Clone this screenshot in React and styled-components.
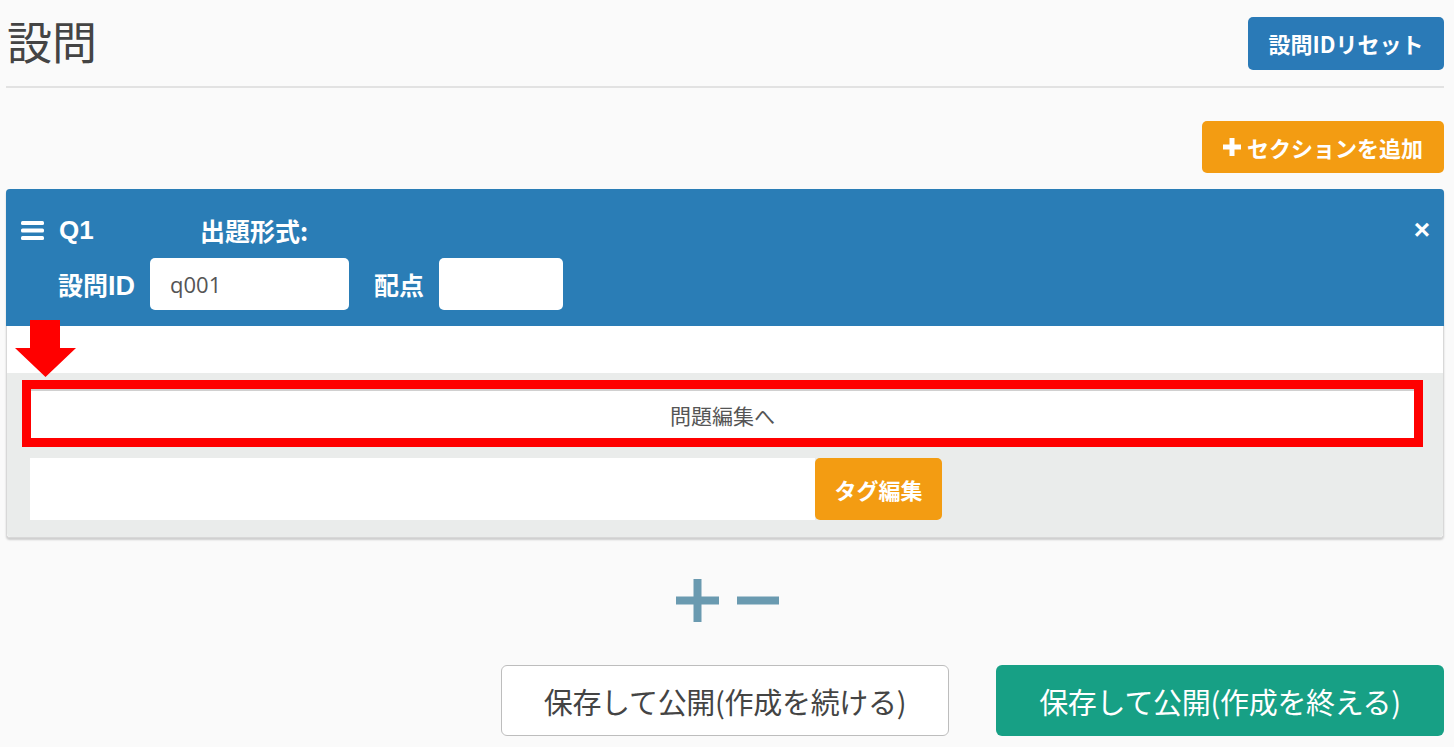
import React from "react";
import styled, { createGlobalStyle } from "styled-components";

const GlobalStyle = createGlobalStyle`
  body {
    margin: 0;
    background: #fafafa;
    font-family: "Noto Sans CJK JP", "Noto Sans", sans-serif;
  }
`;

const Page = styled.div`
  width: 1438px;
  margin-left: 6px;
`;

const TitleRow = styled.div`
  display: flex;
  justify-content: space-between;
  align-items: center;
  height: 86px;
  border-bottom: 2px solid #e2e2e2;
`;

const Title = styled.h1`
  margin: 0 0 4px 1px;
  font-size: 45px;
  font-weight: 400;
  color: #444;
  line-height: 52px;
`;

const Button = styled.button`
  display: inline-flex;
  align-items: center;
  justify-content: center;
  gap: 6px;
  border: none;
  border-radius: 5px;
  font-family: inherit;
  font-weight: 700;
  font-size: ${(p) => p.size || 20}px;
  color: #fff;
  background: ${(p) => p.bg};
  height: ${(p) => p.h}px;
  width: ${(p) => p.w}px;
  padding: 0;
`;

const SectionRow = styled.div`
  display: flex;
  justify-content: flex-end;
  padding-top: 33px;
`;

const Panel = styled.div`
  position: relative;
  margin-top: 16px;
  border: 1px solid #d8d8d8;
  border-top: none;
  border-radius: 4px;
  background: #fff;
  box-shadow: 0 2px 2px rgba(0, 0, 0, 0.18);
`;

const PanelHead = styled.div`
  background: #2a7db6;
  border-radius: 4px 4px 0 0;
  height: 137px;
  box-sizing: border-box;
  padding: 24px 14px 0 15px;
  color: #fff;
  margin: 0 -1px;
`;

const HeadRow = styled.div`
  display: flex;
  align-items: center;
  height: ${(p) => p.h}px;
  margin-top: ${(p) => p.mt || 0}px;
  padding-left: ${(p) => p.pl || 0}px;
`;

const QLabel = styled.span`
  font-family: "Liberation Sans", sans-serif;
  font-weight: 700;
  font-size: 26px;
  margin-left: 15px;
  width: 141px;
`;

const HeadLabel = styled.span`
  font-weight: 700;
  font-size: 25px;
  margin-right: ${(p) => p.mr || 0}px;
`;

const IdText = styled.span`
  font-family: "Liberation Sans", sans-serif;
  font-size: 27px;
  font-weight: 700;
`;

const CloseMark = styled.span`
  margin-left: auto;
  font-size: 28px;
  font-weight: 700;
  line-height: 1;
  font-family: "Liberation Sans", sans-serif;
`;

const Field = styled.div`
  width: ${(p) => p.w}px;
  height: 52px;
  box-sizing: border-box;
  background: #fff;
  border-radius: 5px;
  display: flex;
  align-items: center;
  padding-left: 20px;
  color: #555;
  font-size: 22px;
  font-family: "Open Sans", sans-serif;
  margin-right: ${(p) => p.mr || 0}px;
`;

const WhiteStrip = styled.div`
  height: 47px;
  background: #fff;
`;

const PanelBody = styled.div`
  background: #eaeceb;
  padding: 16px 29px 17px 24px;
  border-radius: 0 0 4px 4px;
`;

const EditBox = styled.div`
  height: 49px;
  background: #fff;
  border-top: 2px solid #d0d0d0;
  box-sizing: border-box;
  outline: 9px solid #ff0000;
  display: flex;
  align-items: center;
  justify-content: center;
  font-size: 21px;
  color: #555;
`;

const TagRow = styled.div`
  display: flex;
  margin-top: 20px;
  margin-left: -1px;
`;

const TagInput = styled.div`
  width: 785px;
  height: 62px;
  background: #fff;
`;

const Arrow = styled.svg`
  position: absolute;
  left: 8px;
  top: 131px;
`;

const PlusMinus = styled.div`
  display: flex;
  justify-content: center;
  gap: 18px;
  margin-top: 41px;
  padding-left: 5px;
`;

const FootRow = styled.div`
  display: flex;
  justify-content: flex-end;
  gap: 47px;
  margin-top: 43px;
`;

const FootButton = styled.button`
  width: 448px;
  height: 71px;
  border-radius: 6px;
  font-family: inherit;
  font-size: 29px;
  letter-spacing: -0.3px;
  color: ${(p) => (p.primary ? "#fff" : "#444")};
  background: ${(p) => (p.primary ? "#17a085" : "#fff")};
  border: ${(p) => (p.primary ? "none" : "1px solid #bdbdbd")};
`;

export default function App() {
  return (
    <Page>
      <GlobalStyle />
      <TitleRow>
        <Title>設問</Title>
        <Button bg="#2a7ab7" w={196} h={53} size={22}>
          設問IDリセット
        </Button>
      </TitleRow>
      <SectionRow>
        <Button bg="#f39c12" w={242} h={52} size={22}>
          <svg width="18" height="18" viewBox="0 0 18 18">
            <rect x="6.5" y="0" width="5" height="18" fill="#fff" />
            <rect x="0" y="6.5" width="18" height="5" fill="#fff" />
          </svg>
          セクションを追加
        </Button>
      </SectionRow>
      <Panel>
        <PanelHead>
          <HeadRow h={34}>
            <svg width="23" height="19" viewBox="0 0 23 19">
              <rect x="0" y="0" width="23" height="4" rx="1.5" fill="#fff" />
              <rect x="0" y="7.5" width="23" height="4" rx="1.5" fill="#fff" />
              <rect x="0" y="15" width="23" height="4" rx="1.5" fill="#fff" />
            </svg>
            <QLabel>Q1</QLabel>
            <HeadLabel>出題形式:</HeadLabel>
            <CloseMark>×</CloseMark>
          </HeadRow>
          <HeadRow h={52} mt={11} pl={37}>
            <HeadLabel mr={15}>
              設問<IdText>ID</IdText>
            </HeadLabel>
            <Field w={199} mr={25}>q001</Field>
            <HeadLabel mr={15}>配点</HeadLabel>
            <Field w={124} />
          </HeadRow>
        </PanelHead>
        <WhiteStrip />
        <PanelBody>
          <EditBox>問題編集へ</EditBox>
          <TagRow>
            <TagInput />
            <Button bg="#f39c12" w={127} h={62} size={22}>
              タグ編集
            </Button>
          </TagRow>
        </PanelBody>
        <Arrow width="62" height="57" viewBox="0 0 62 57">
          <polygon points="15,0 45,0 45,28 61,28 30.5,57 0,28 15,28" fill="#ff0000" />
        </Arrow>
      </Panel>
      <PlusMinus>
        <svg width="43" height="43" viewBox="0 0 43 43">
          <rect x="17.5" y="0" width="8" height="43" fill="#6a9ab0" />
          <rect x="0" y="17.5" width="43" height="8" fill="#6a9ab0" />
        </svg>
        <svg width="42" height="43" viewBox="0 0 42 43">
          <rect x="0" y="17.5" width="42" height="8" fill="#6a9ab0" />
        </svg>
      </PlusMinus>
      <FootRow>
        <FootButton>保存して公開(作成を続ける)</FootButton>
        <FootButton primary>保存して公開(作成を終える)</FootButton>
      </FootRow>
    </Page>
  );
}
